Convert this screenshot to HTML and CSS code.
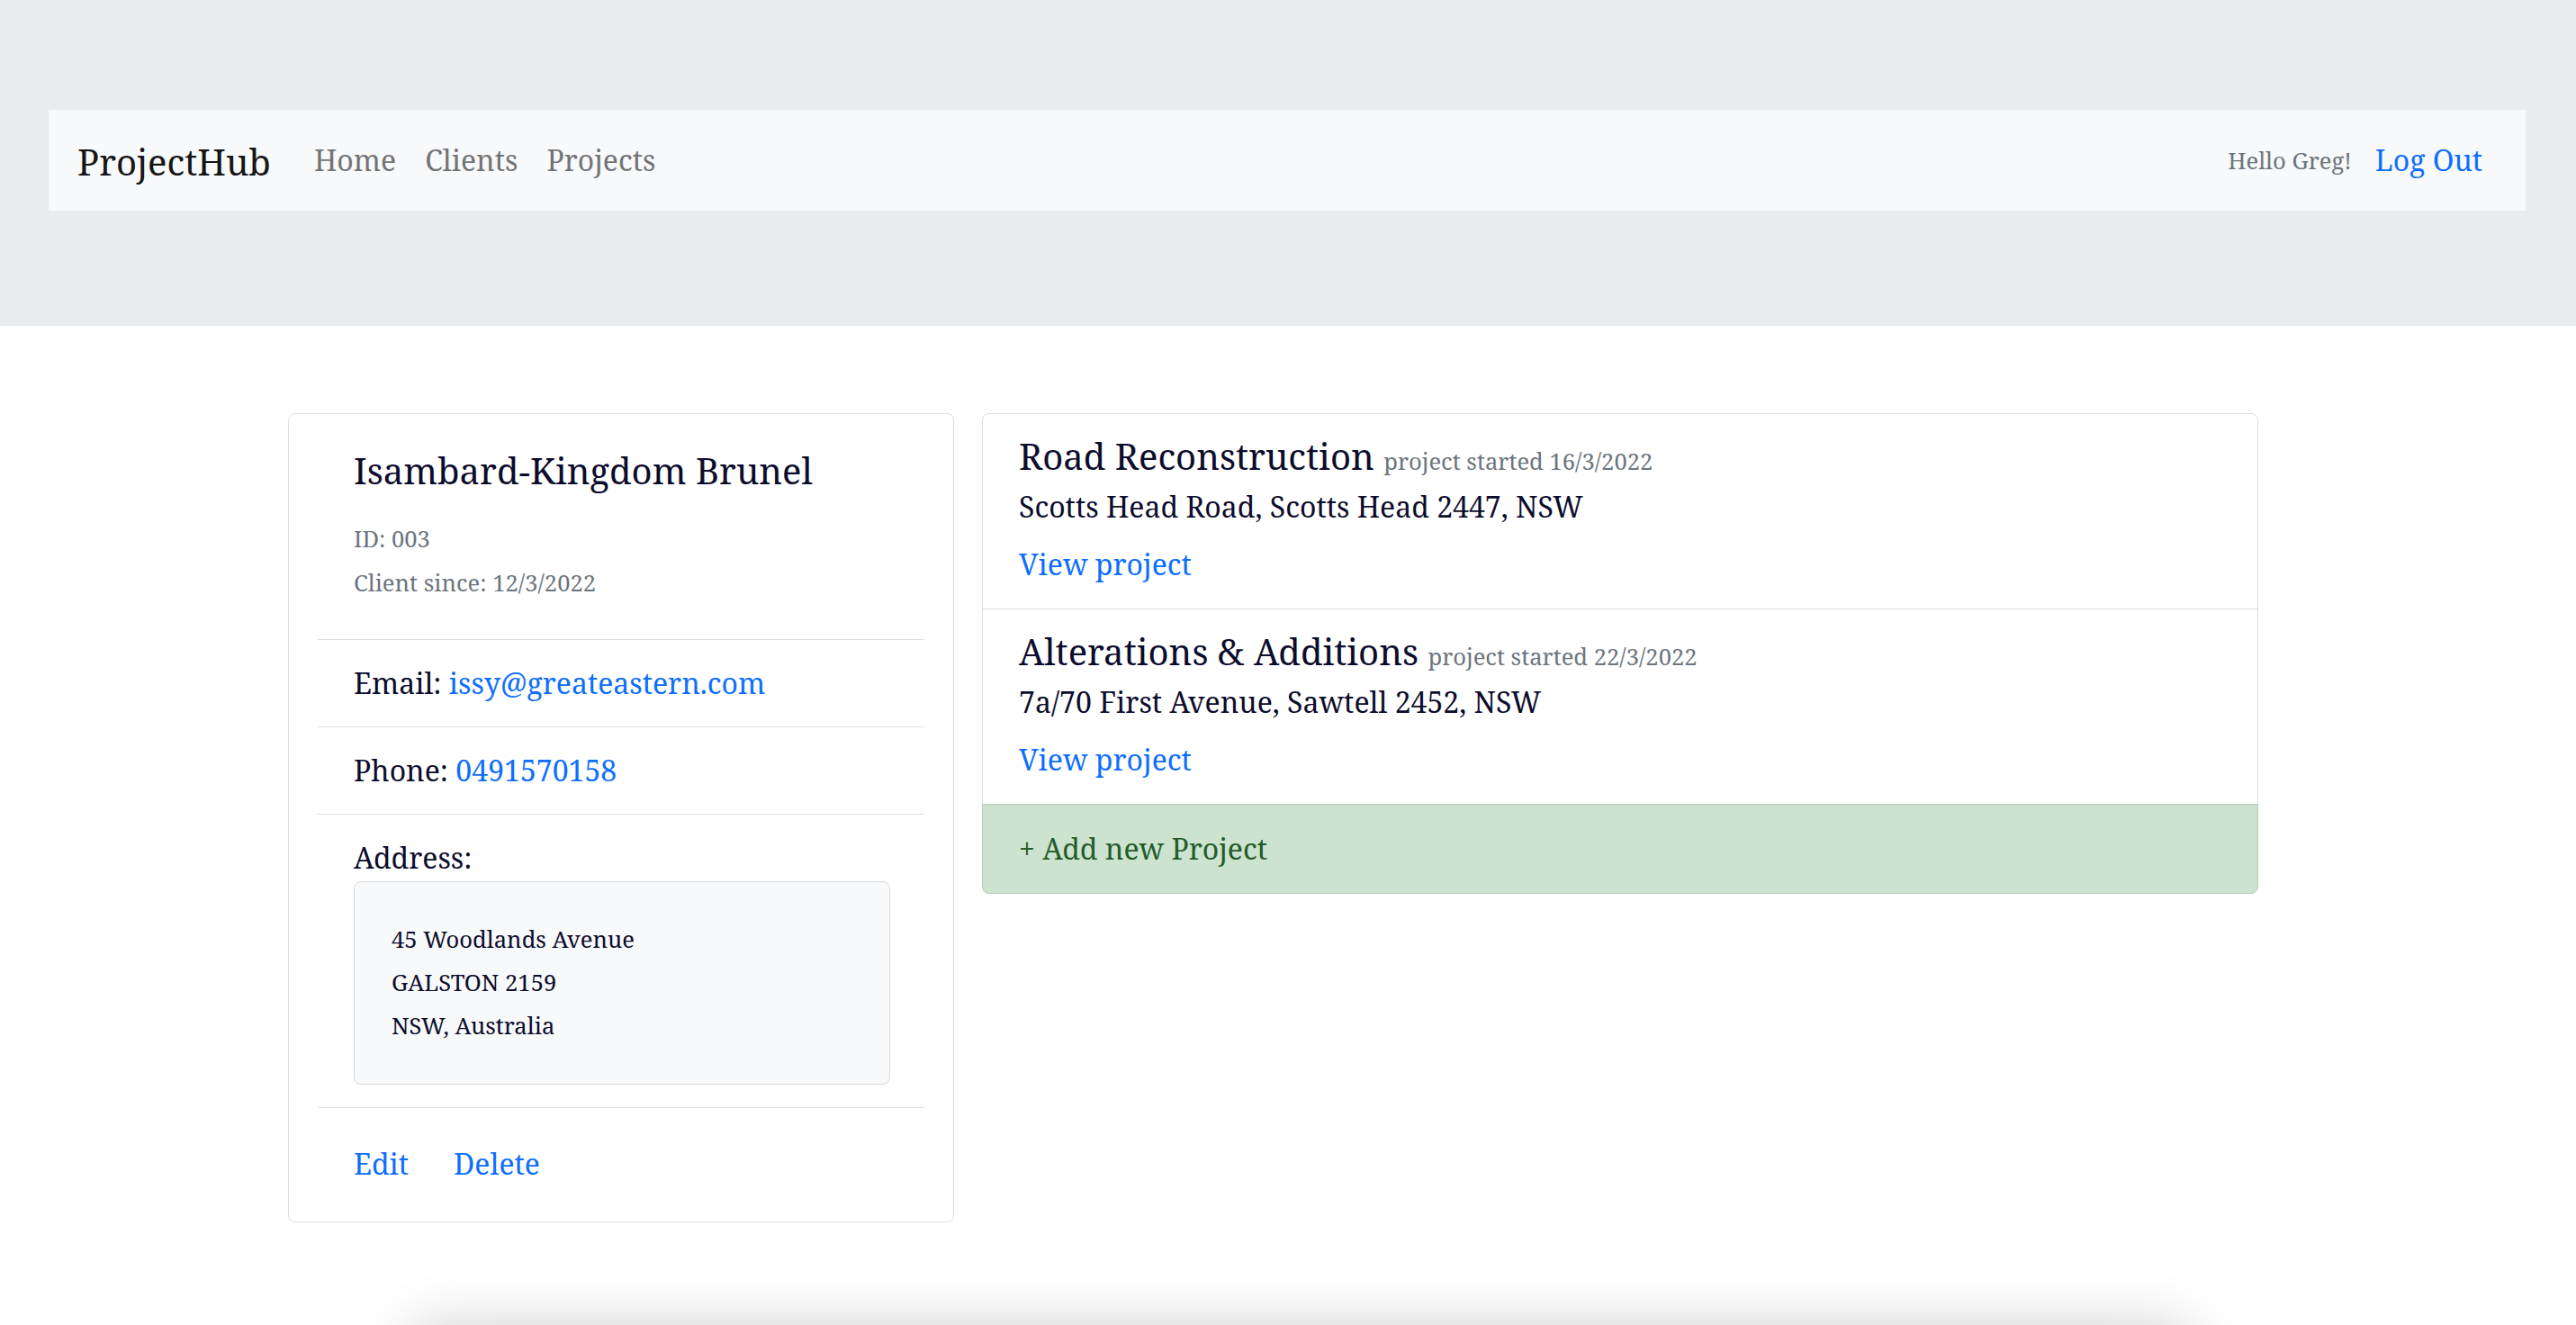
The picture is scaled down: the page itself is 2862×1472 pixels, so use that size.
FILE: index.html
```html
<!DOCTYPE html>
<html lang="en">
<head>
<meta charset="utf-8">
<title>ProjectHub – Isambard-Kingdom Brunel</title>
<link rel="stylesheet" href="styles.css">
</head>
<body>
<header class="band">
  <nav class="navbar">
    <a class="brand" href="#">ProjectHub</a>
    <ul class="nav">
      <li><a class="nav-link" href="#">Home</a></li>
      <li><a class="nav-link" href="#">Clients</a></li>
      <li><a class="nav-link" href="#">Projects</a></li>
    </ul>
    <div class="nav-right">
      <span class="hello">Hello Greg!</span>
      <a class="logout" href="#">Log Out</a>
    </div>
  </nav>
</header>

<main class="content">
  <section class="client-card">
    <div class="client-head">
      <h5 class="client-name">Isambard-Kingdom Brunel</h5>
      <div class="meta">
        <div>ID: 003</div>
        <div>Client since: 12/3/2022</div>
      </div>
    </div>
    <div class="row-item">Email: <a href="#">issy@greateastern.com</a></div>
    <div class="row-item">Phone: <a href="#">0491570158</a></div>
    <div class="row-item address-item">
      <div>Address:</div>
      <div class="address-box">
        <div>45 Woodlands Avenue</div>
        <div>GALSTON 2159</div>
        <div>NSW, Australia</div>
      </div>
    </div>
    <div class="row-item actions">
      <a href="#">Edit</a>
      <a href="#">Delete</a>
    </div>
  </section>

  <section class="projects-card">
    <div class="project">
      <h5 class="project-title">Road Reconstruction <small class="started">project started 16/3/2022</small></h5>
      <p class="project-addr">Scotts Head Road, Scotts Head 2447, NSW</p>
      <a class="view" href="#">View project</a>
    </div>
    <div class="project last">
      <h5 class="project-title">Alterations &amp; Additions <small class="started">project started 22/3/2022</small></h5>
      <p class="project-addr">7a/70 First Avenue, Sawtell 2452, NSW</p>
      <a class="view" href="#">View project</a>
    </div>
    <a class="add-project" href="#">+ Add new Project</a>
  </section>
</main>

<footer class="footer-panel"></footer>
</body>
</html>
```

FILE: styles.css
```css
html, body {
  overflow: hidden;
}

body {
  margin: 0;
  font-family: "Noto Serif", "DejaVu Serif", "Liberation Serif", serif;
  font-size: 32px;
  line-height: 48px;
  color: #0c0c2c;
  background: #ffffff;
}

a {
  color: #0d6efd;
  text-decoration: none;
}

/* ---------- header band ---------- */
.band {
  background: #ebecf0;
  padding: 122px 56px 128px 54px;
}

.navbar {
  height: 112px;
  background: #f8f9fa;
  display: flex;
  align-items: center;
  padding: 0 32px;
}

.brand {
  font-size: 40px;
  line-height: 48px;
  color: #161616;
  margin-right: 32px;
  position: relative;
  top: 2px;
}

.nav {
  list-style: none;
  margin: 0;
  padding: 0;
  display: flex;
}

.nav-link {
  display: block;
  padding: 0 16px;
  color: #737475;
}

.nav-right {
  margin-left: auto;
  display: flex;
  align-items: center;
}

.hello {
  font-size: 25.6px;
  line-height: 42px;
  color: #6c757d;
  margin-right: 10px;
  position: relative;
  top: 1px;
}

.logout {
  padding: 0 16px;
}

/* ---------- main ---------- */
.content {
  display: flex;
  align-items: flex-start;
  gap: 31px;
  padding: 97px 0 0 320px;
}

.client-card {
  width: 740px;
  box-sizing: border-box;
  border: 1px solid #dedede;
  border-radius: 8px;
  padding: 0 32px;
}

.client-head {
  padding: 39px 40px 38px;
}

.client-name {
  margin: 0;
  font-size: 40px;
  line-height: 48px;
  font-weight: 400;
}

.meta {
  margin-top: 27px;
  font-size: 25.6px;
  line-height: 49px;
  color: #6c757d;
}

.row-item {
  border-top: 1px solid #dedede;
  padding: 24px 40px;
}

.address-item {
  padding-bottom: 25px;
}

.address-box {
  margin-top: 2px;
  width: 596px;
  box-sizing: border-box;
  background: #f8f9fa;
  border: 1px solid #dadada;
  border-radius: 8px;
  padding: 40px 41px;
  font-size: 25.6px;
  line-height: 48px;
}

.actions {
  padding: 38px 40px 40px;
  display: flex;
  gap: 50px;
}

/* ---------- projects ---------- */
.projects-card {
  width: 1418px;
  box-sizing: border-box;
  border: 1px solid #dedede;
  border-radius: 8px;
  display: flex;
  flex-direction: column;
}

.project {
  padding: 23px 40px 25px;
  border-bottom: 1px solid #dedede;
}

.project.last {
  border-bottom: none;
}

.project-title {
  margin: 0 0 8px;
  font-size: 40px;
  line-height: 48px;
  font-weight: 400;
}

.started {
  font-size: 25.6px;
  line-height: 1;
  color: #6c757d;
}

.project-addr {
  margin: 0 0 16px;
}

.view {
  display: inline-block;
}

.add-project {
  margin: 0 -1px -1px;
  padding: 25px 40px;
  background: #cce3cf;
  color: #255a2b;
  border: 1px solid #b7cbba;
  border-radius: 0 0 8px 8px;
}

/* ---------- bottom panel (below the fold) ---------- */
.footer-panel {
  margin: 116px 0 0 450px;
  width: 1990px;
  height: 400px;
  border-radius: 40px;
  background: #ffffff;
  box-shadow: 0 0 64px 0 rgba(0, 0, 0, 0.2);
}
```
